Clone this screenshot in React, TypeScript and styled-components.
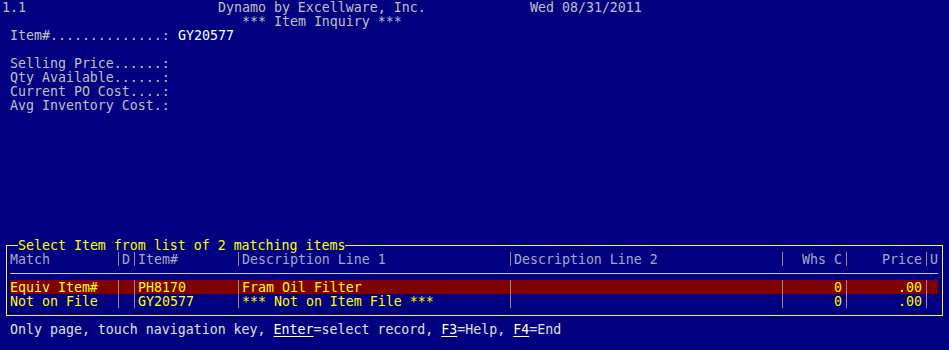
import React from 'react';
import styled, { createGlobalStyle } from 'styled-components';

const CELL = 8;
const ROW = 14;

const colors = {
  navy: '#000080',
  text: '#c0c0c0',
  bright: '#ffffff',
  yellow: '#ffff00',
  frame: '#f0f050',
  header: '#a8a8c8',
  rule: '#c8c8e0',
  sep: '#a08894',
  selected: '#800000',
};

const GlobalStyle = createGlobalStyle`
  html, body {
    margin: 0;
    padding: 0;
    background: ${colors.navy};
  }
`;

const Screen = styled.div`
  width: 949px;
  height: 350px;
  box-sizing: border-box;
  padding-left: 2px;
  overflow: hidden;
  background: ${colors.navy};
  color: ${colors.text};
  font-family: "DejaVu Sans Mono", "Liberation Mono", monospace;
  font-size: 13.28px;
  line-height: 16px;
`;

const Line = styled.div<{ $indent?: number }>`
  display: flex;
  height: ${ROW}px;
  white-space: pre;
  padding-left: ${p => (p.$indent || 0) * CELL}px;
`;

const Cell = styled.span<{ $cols: number; $bright?: boolean }>`
  flex: none;
  width: ${p => p.$cols * CELL}px;
  color: ${p => (p.$bright ? colors.bright : 'inherit')};
`;

const Gap = styled.div<{ $rows: number }>`
  height: ${p => p.$rows * ROW}px;
`;

const Frame = styled.div`
  position: relative;
  width: 937px;
  box-sizing: border-box;
  margin: 7px 0 6px 4px;
  padding: 6px 4px 7px 3px;
  border: 1px solid ${colors.frame};
`;

const FrameTitle = styled.span`
  position: absolute;
  top: -8px;
  left: 11px;
  height: ${ROW}px;
  background: ${colors.navy};
  color: ${colors.yellow};
  white-space: pre;
`;

// Match | D | Item# | Desc 1 | Desc 2 | Whs C | Price | U  (separators are one cell wide)
const columns = [13, 1, 1, 1, 12, 1, 33, 1, 33, 1, 7, 1, 9, 1, 1]
  .map(n => `${n * CELL}px`)
  .join(' ');

const TableRow = styled.div<{ $head?: boolean; $selected?: boolean }>`
  display: grid;
  grid-template-columns: ${columns};
  height: ${ROW}px;
  white-space: pre;
  color: ${p => (p.$head ? colors.header : colors.yellow)};
  background: ${p => (p.$selected ? colors.selected : 'transparent')};
`;

const Col = styled.span<{ $right?: boolean }>`
  height: ${ROW}px;
  text-align: ${p => (p.$right ? 'right' : 'left')};
`;

const Sep = styled.span`
  height: ${ROW}px;
  background: linear-gradient(${colors.sep}, ${colors.sep}) 4px 0 / 1px 100% no-repeat;
`;

const Rule = styled.div`
  height: ${ROW}px;
  background: linear-gradient(${colors.rule}, ${colors.rule}) 0 center / 100% 1px no-repeat;
`;

const Footer = styled(Line)`
  color: #e0e0e0;
`;

const Key = styled.span`
  color: ${colors.bright};
  text-decoration: underline;
  text-underline-offset: 2px;
`;

interface ListItem {
  match: string;
  d: string;
  item: string;
  desc1: string;
  desc2: string;
  whs: string;
  price: string;
  u: string;
}

const items: ListItem[] = [
  { match: 'Equiv Item#', d: '', item: 'PH8170', desc1: 'Fram Oil Filter', desc2: '', whs: '0', price: '.00', u: '' },
  { match: 'Not on File', d: '', item: 'GY20577', desc1: '*** Not on Item File ***', desc2: '', whs: '0', price: '.00', u: '' },
];

const fields: [string, string][] = [
  ['Selling Price......:', ''],
  ['Qty Available......:', ''],
  ['Current PO Cost....:', ''],
  ['Avg Inventory Cost.:', ''],
];

function Row(props: { row: ListItem; head?: boolean; selected?: boolean }) {
  const r = props.row;
  return (
    <TableRow $head={props.head} $selected={props.selected}>
      <Col>{r.match}</Col>
      <Sep />
      <Col>{r.d}</Col>
      <Sep />
      <Col>{r.item}</Col>
      <Sep />
      <Col>{r.desc1}</Col>
      <Sep />
      <Col>{r.desc2}</Col>
      <Sep />
      <Col $right>{r.whs}</Col>
      <Sep />
      <Col $right>{r.price}</Col>
      <Sep />
      <Col>{r.u}</Col>
    </TableRow>
  );
}

const headRow: ListItem = {
  match: 'Match',
  d: 'D',
  item: 'Item#',
  desc1: 'Description Line 1',
  desc2: 'Description Line 2',
  whs: 'Whs C',
  price: 'Price',
  u: 'U',
};

export default function App() {
  return (
    <>
      <GlobalStyle />
      <Screen>
        <Line>
          <Cell $cols={27}>1.1</Cell>
          <Cell $cols={39}>Dynamo by Excellware, Inc.</Cell>
          <Cell $cols={14}>Wed 08/31/2011</Cell>
        </Line>
        <Line $indent={30}>*** Item Inquiry ***</Line>
        <Line $indent={1}>
          <Cell $cols={21}>Item#..............:</Cell>
          <Cell $cols={10} $bright>GY20577</Cell>
        </Line>
        <Gap $rows={1} />
        {fields.map(([label, value]) => (
          <Line key={label} $indent={1}>
            <Cell $cols={21}>{label}</Cell>
            <Cell $cols={10} $bright>{value}</Cell>
          </Line>
        ))}
        <Gap $rows={9} />

        <Frame>
          <FrameTitle>Select Item from list of 2 matching items</FrameTitle>
          <Row row={headRow} head />
          <Rule />
          {items.map((it, i) => (
            <Row key={it.match} row={it} selected={i === 0} />
          ))}
        </Frame>

        <Footer $indent={1}>
          Only page, touch navigation key, <Key>Enter</Key>=select record, <Key>F3</Key>=Help, <Key>F4</Key>=End
        </Footer>
      </Screen>
    </>
  );
}
